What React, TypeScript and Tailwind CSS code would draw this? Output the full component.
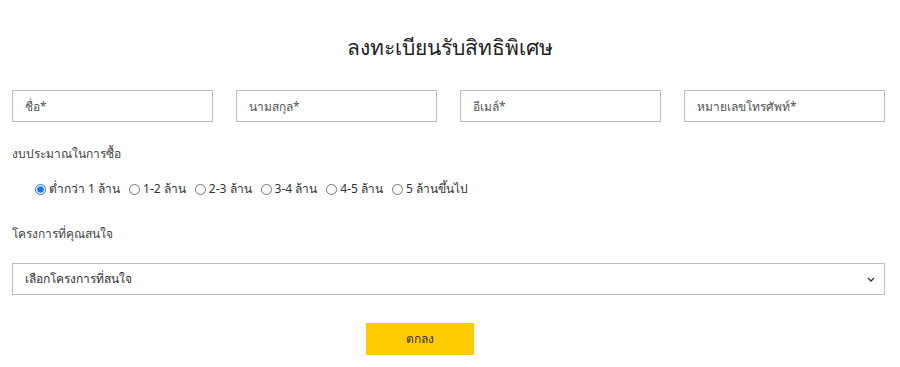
import React, { useState } from 'react';

const budgets = ['ต่ำกว่า 1 ล้าน', '1-2 ล้าน', '2-3 ล้าน', '3-4 ล้าน', '4-5 ล้าน', '5 ล้านขึ้นไป'];

const fields = ['ชื่อ*', 'นามสกุล*', 'อีเมล์*', 'หมายเลขโทรศัพท์*'];

export default function App() {
  const [budget, setBudget] = useState(0);

  return (
    <div className="w-[900px] h-[367px] bg-white px-3 text-[#333] font-['Noto_Sans','Liberation_Sans',sans-serif]">
      {/* Title */}
      <h1 className="pt-[31px] text-center text-[21px] leading-[32px] text-[#222]">ลงทะเบียนรับสิทธิพิเศษ</h1>

      {/* Name / contact inputs */}
      <div className="mt-[27px] grid grid-cols-4 gap-[23px] pr-[3px]">
        {fields.map((f) => (
          <input
            key={f}
            placeholder={f}
            className="h-[32px] border border-[#bdbdbd] px-3 text-[12px] placeholder:text-[#555] outline-none"
          />
        ))}
      </div>

      {/* Budget */}
      <p className="mt-[22px] text-[12px] leading-[20px] text-[#444]">งบประมาณในการซื้อ</p>
      <div className="mt-[16px] flex items-center pl-[23px] text-[12px] leading-[18px] text-[#333]">
        {budgets.map((b, i) => (
          <label key={b} className="mr-[9px] flex items-center gap-[3px]">
            <input
              type="radio"
              name="budget"
              checked={budget === i}
              onChange={() => setBudget(i)}
              className="m-0 h-[11px] w-[11px] accent-[#1a73e8]"
            />
            <span>{b}</span>
          </label>
        ))}
      </div>

      {/* Project */}
      <p className="mt-[26px] text-[12px] leading-[20px] text-[#444]">โครงการที่คุณสนใจ</p>
      <div className="relative mt-[19px] pr-[3px]">
        <select className="h-[32px] w-full appearance-none border border-[#bdbdbd] bg-white px-3 text-[12px] text-[#333] outline-none">
          <option>เลือกโครงการที่สนใจ</option>
        </select>
        <svg
          className="pointer-events-none absolute right-[13px] top-[14px]"
          width="8"
          height="5"
          viewBox="0 0 8 5"
        >
          <path d="M1 1l3 3 3-3" fill="none" stroke="#333" strokeWidth="1.3" />
        </svg>
      </div>

      {/* Submit */}
      <div className="mt-[28px] flex pl-[354px]">
        <button className="h-[32px] w-[108px] bg-[#ffcc00] text-[12px] text-[#333]">ตกลง</button>
      </div>
    </div>
  );
}
